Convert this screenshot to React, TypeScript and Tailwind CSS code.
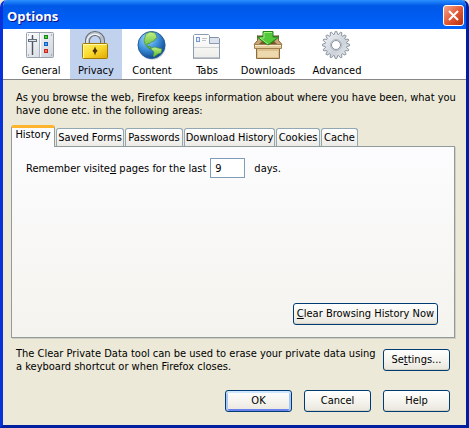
import { useState, type ReactNode } from 'react';

function GeneralIcon() {
  return (
    <svg width="30" height="30" viewBox="0 0 30 30" aria-hidden="true">
      <defs>
        <linearGradient id="panelFace" x1="0" y1="0" x2="1" y2="1">
          <stop offset="0" stopColor="#fff" />
          <stop offset="1" stopColor="#ccd3dc" />
        </linearGradient>
      </defs>
      <rect x="0.5" y="2.5" width="27" height="25" rx="1" fill="url(#panelFace)" stroke="#98a1ad" />
      <path d="M13.5 3v24" stroke="#a9b2bd" />
      <path d="M14.5 3v24" stroke="#fff" />
      <path d="M6.5 5v20" stroke="#4d5660" strokeWidth="1.4" />
      <rect x="2.5" y="9.5" width="8" height="2" fill="#dfe5ec" stroke="#626d79" />
      <rect x="18.5" y="5.5" width="3" height="3" fill="#4fcf3c" stroke="#16851c" />
      <rect x="18.5" y="12.5" width="3" height="3" fill="#4ba2ff" stroke="#1760bd" />
      <rect x="18.5" y="19.5" width="3" height="3" fill="#ff6f58" stroke="#c0291f" />
      <path d="M2 5h1M25 5h1M2 25h1M25 25h1" stroke="#77818e" />
    </svg>
  );
}

function PrivacyIcon() {
  return (
    <svg width="30" height="30" viewBox="0 0 30 30" aria-hidden="true">
      <defs>
        <linearGradient id="brass" x1="0" y1="0" x2="1" y2="1">
          <stop offset="0" stopColor="#fff36b" />
          <stop offset=".5" stopColor="#f9d92f" />
          <stop offset="1" stopColor="#dfa600" />
        </linearGradient>
      </defs>
      <path d="M6.500 15v-4.500a7.500 7 0 0 1 15 0v4.500" fill="none" stroke="#606873" strokeWidth="5" />
      <path d="M6.500 15v-4.500a7.500 7 0 0 1 15 0v4.500" fill="none" stroke="#b9c0c9" strokeWidth="3.200" />
      <path d="M6 14v-3a8 8 0 0 1 13-5" fill="none" stroke="#f4f6f8" strokeWidth="1.200" />
      <rect x="1.500" y="13.500" width="25" height="15" rx="1" fill="url(#brass)" stroke="#a17a08" />
      <path d="M2.500 28V14.500h23" fill="none" stroke="#fffaa8" />
      <path d="M14 16.500l1 2.500 1.600 2-1.600 1.500-1 3-1-3-1.600-1.500 1.600-2z" fill="#4a3500" />
    </svg>
  );
}

function ContentIcon() {
  return (
    <svg width="30" height="30" viewBox="0 0 30 30" aria-hidden="true">
      <defs>
        <radialGradient id="ocean" cx=".35" cy=".25" r=".8">
          <stop offset="0" stopColor="#a8dcff" />
          <stop offset=".5" stopColor="#3f94dc" />
          <stop offset="1" stopColor="#0d3f8b" />
        </radialGradient>
        <linearGradient id="land" x1="0" y1="0" x2="0" y2="1">
          <stop offset="0" stopColor="#c4f088" />
          <stop offset="1" stopColor="#55b42d" />
        </linearGradient>
      </defs>
      <circle cx="15" cy="16" r="13.800" fill="#cbd2da" />
      <circle cx="14.500" cy="15" r="13.500" fill="url(#ocean)" stroke="#255b9d" />
      <path d="M9 4l4-2 5 1 1 2 1 3-2 1-1 2-3 1-2 2-1-1-1 2 1 2 2-1 1 3-3-1-3-4-1-4 1-3z" fill="url(#land)" stroke="#428a34" strokeWidth=".6" />
      <path d="M14 18l4-1 3 1 4 1-1 4-3 1-4 3-1-1 1-4-3-3z" fill="url(#land)" stroke="#428a34" strokeWidth=".6" />
    </svg>
  );
}

function TabsIcon() {
  return (
    <svg width="30" height="30" viewBox="0 0 30 30" aria-hidden="true">
      <defs>
        <linearGradient id="sheet" x1="0" y1="0" x2="0" y2="1">
          <stop offset="0" stopColor="#fff" />
          <stop offset="1" stopColor="#edeee9" />
        </linearGradient>
      </defs>
      <path d="M17.500 15V7.500h9l1 1V16" fill="#dde3ec" stroke="#8090a8" />
      <path d="M1.500 28V5.500l1-1h14l1 1v8h10V28z" fill="url(#sheet)" stroke="#8c9bb1" />
      <path d="M2 17.500h25" stroke="#d2d4d4" />
      <path d="M1 28.500h27" stroke="#a6abb2" />
      <rect x="4.500" y="7.500" width="3" height="4" fill="#e7edff" stroke="#7897d6" />
      <path d="M10 8.500h5M10 10.500h4" stroke="#bfc4cc" />
    </svg>
  );
}

function DownloadsIcon() {
  return (
    <svg width="30" height="30" viewBox="0 0 30 30" aria-hidden="true">
      <path d="M5 6h20v9H5z" fill="#76522e" stroke="#674927" />
      <path d="M4.500 5.500v5l-3.500 4h5l3-3zM25.500 5.500v5l3.500 4h-5l-3-3z" fill="#c7a776" stroke="#856338" />
      <path d="M3.500 16.500h23v12h-23z" fill="#ddc28f" stroke="#8c6b40" />
      <path d="M1.500 14.500h27v4h-27z" fill="#e3cb9b" stroke="#a1804f" />
      <path d="M2 15.500h26" stroke="#f7ead0" />
      <path d="M5 21h20v6H5z" fill="#ecd9ae" />
      <path d="M10 1.500h10V7h6L15 15 4 7h6z" fill="#52c83a" stroke="#21851c" />
      <path d="M11 2.500h8M11 3v5H7l8 6" fill="none" stroke="#a0f080" />
    </svg>
  );
}

const gearOutline = Array.from({ length: 16 }, (_, tooth) =>
  [
    [10.8, -0.5],
    [13.6, -0.17],
    [13.6, 0.17],
    [10.8, 0.5],
  ]
    .map(([radius, shift]) => {
      const angle = ((tooth + shift * 0.8) * Math.PI) / 8;
      return `${(14 + radius * Math.sin(angle)).toFixed(2)} ${(15 - radius * Math.cos(angle)).toFixed(2)}`;
    })
    .join('L'),
).join('L');

function AdvancedIcon() {
  return (
    <svg width="30" height="30" viewBox="0 0 30 30" aria-hidden="true">
      <defs>
        <linearGradient id="steel" x1="0" y1="0" x2="1" y2="1">
          <stop offset="0" stopColor="#f3f5f8" />
          <stop offset=".6" stopColor="#cdd3da" />
          <stop offset="1" stopColor="#eceff3" />
        </linearGradient>
      </defs>
      <path
        fillRule="evenodd"
        d={`M${gearOutline}ZM14 10.500a4.500 4.500 0 1 0 0 9 4.500 4.500 0 0 0 0-9z`}
        fill="url(#steel)"
        stroke="#7e8995"
        strokeWidth=".9"
      />
      <circle cx="14" cy="15" r="5.500" fill="none" stroke="#b0b8c2" />
    </svg>
  );
}

const sections = [
  { name: 'General', width: 'w-[58px]', icon: <GeneralIcon /> },
  { name: 'Privacy', width: 'w-[52px]', icon: <PrivacyIcon /> },
  { name: 'Content', width: 'w-[60px]', icon: <ContentIcon /> },
  { name: 'Tabs', width: 'w-[50px]', icon: <TabsIcon /> },
  { name: 'Downloads', width: 'w-[72px]', icon: <DownloadsIcon /> },
  { name: 'Advanced', width: 'w-[66px]', icon: <AdvancedIcon /> },
];

const tabs = [
  { name: 'History', width: 'w-[44px]' },
  { name: 'Saved Forms', width: 'w-[68px]' },
  { name: 'Passwords', width: 'w-[58px]' },
  { name: 'Download History', width: 'w-[91px]' },
  { name: 'Cookies', width: 'w-[44px]' },
  { name: 'Cache', width: 'w-[37px]' },
];

function DialogButton({ children, width, primary = false }: { children: ReactNode; width: string; primary?: boolean }) {
  return (
    <button
      type="button"
      className={`h-[22px] shrink-0 whitespace-nowrap rounded-[3px] border border-[#003c74] bg-linear-to-b from-white via-[#f5f4ef] to-[#e9e6dc] leading-[20px] ${width} ${
        primary ? 'shadow-[inset_0_2px_0_#cee7ff,inset_2px_0_0_#a9c6f5,inset_-2px_0_0_#a9c6f5,inset_0_-2px_0_#6982ee]' : 'shadow-[inset_0_-1px_0_#d6d0c5]'
      }`}
    >
      {children}
    </button>
  );
}

export default function App() {
  const [section, setSection] = useState('Privacy');
  const [tab, setTab] = useState('History');

  return (
    <div className="bg-[#ece9d8]">
      <main className="flex min-h-screen flex-col overflow-hidden rounded-t-[7px] border-x-[3px] border-b-[3px] border-[#0831d9] border-r-[#001ea0] border-b-[#001ea0] bg-[#ece9d8] font-['DejaVu_Sans_Condensed','DejaVu_Sans',sans-serif] text-[11px] leading-[13px] text-black">
        <header className="flex h-[29px] items-center justify-between bg-linear-to-b from-[#2b8fff] via-[#0058e6] via-20% to-[#0062ff] pr-[2px] pl-1">
          <h1 className="pt-1 font-['Open_Sans','Liberation_Sans',sans-serif] text-[13px] font-bold text-white [text-shadow:1px_1px_#0f1089]">Options</h1>
          <button type="button" aria-label="Close" className="mt-px flex size-[21px] items-center justify-center rounded-[3px] border border-white bg-linear-to-br from-[#f0a58b] via-[#e25a37] to-[#b92d0b]">
            <svg width="13" height="13" viewBox="0 0 13 13" aria-hidden="true">
              <path d="M2 2l9 9M11 2l-9 9" stroke="#fff" strokeWidth="2" />
            </svg>
          </button>
        </header>

        <nav aria-label="Sections" className="flex h-[51px] border-b border-[#868686] bg-white pl-[9px]">
          {sections.map((s) => (
            <button
              key={s.name}
              type="button"
              aria-pressed={section === s.name}
              onClick={() => setSection(s.name)}
              className={`flex flex-col items-center pt-px ${s.width} ${section === s.name ? 'bg-[#c1d2ee]' : ''}`}
            >
              {s.icon}
              <span className="mt-1">{s.name}</span>
            </button>
          ))}
        </nav>

        <div className="px-2 pt-[11px] pb-[13px]">
          <p className="whitespace-nowrap px-[5px]">
            As you browse the web, Firefox keeps information about where you have been, what you
            <br />
            have done etc. in the following areas:
          </p>

          <div role="tablist" className="mt-2 flex h-[21px] items-end gap-px">
            {tabs.map((t) => (
              <button
                key={t.name}
                id={`tab-${t.name}`}
                type="button"
                role="tab"
                aria-selected={tab === t.name}
                onClick={() => setTab(t.name)}
                className={`flex justify-center whitespace-nowrap rounded-t-[3px] ${t.width} ${
                  tab === t.name
                    ? 'z-10 -mb-px h-[22px] border-x border-t-[3px] border-x-[#919b9c] border-t-[#ffb42e] bg-[#fcfcfe]'
                    : 'h-[18px] border border-b-0 border-[#91a7b4] bg-linear-to-b from-white to-[#ecebe6] pt-[2px]'
                }`}
              >
                {t.name}
              </button>
            ))}
          </div>

          <section role="tabpanel" aria-labelledby={`tab-${tab}`} className="mr-[3px] flex h-[192px] flex-col justify-between border border-[#919b9c] bg-linear-to-b from-[#fcfcfe] to-[#f4f3ee] pt-[11px] pr-4 pb-3 pl-[14px] shadow-[1px_1px_0_#d0cebf]">
            <div className="flex items-center">
              <label htmlFor="days">
                Remember visite<u>d</u> pages for the last
              </label>
              <input id="days" type="text" defaultValue="9" className="mr-[9px] ml-1 h-[20px] w-[35px] border border-[#7f9db9] bg-white px-1" />
              <span>days.</span>
            </div>
            <div className="flex justify-end">
              <DialogButton width="w-[145px]">
                <u>C</u>lear Browsing History Now
              </DialogButton>
            </div>
          </section>

          <div className="mt-[9px] flex items-center justify-between pr-[8px] pl-[5px]">
            <p className="whitespace-nowrap">
              The Clear Private Data tool can be used to erase your private data using
              <br />a keyboard shortcut or when Firefox closes.
            </p>
            <DialogButton width="w-[67px]">
              Se<u>t</u>tings...
            </DialogButton>
          </div>

          <footer className="mt-[17px] flex justify-end gap-3 pr-[8px]">
            <DialogButton width="w-[67px]" primary>
              OK
            </DialogButton>
            <DialogButton width="w-[67px]">Cancel</DialogButton>
            <DialogButton width="w-[67px]">Help</DialogButton>
          </footer>
        </div>
      </main>
    </div>
  );
}
